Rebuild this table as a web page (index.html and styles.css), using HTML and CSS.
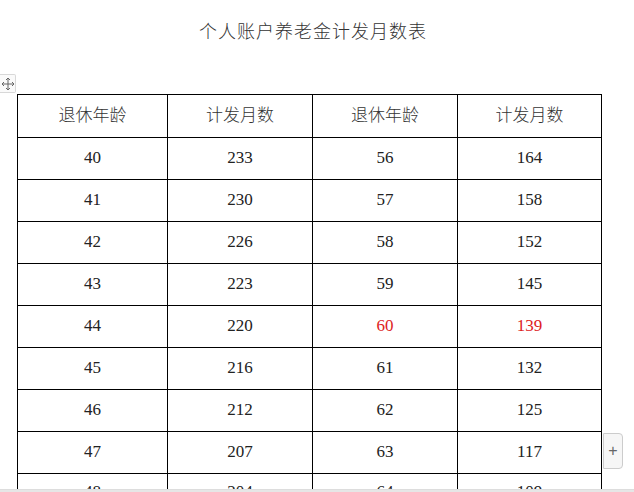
FILE: index.html
```html
<!DOCTYPE html>
<html lang="zh">
<head>
<meta charset="utf-8">
<title>个人账户养老金计发月数表</title>
<link rel="stylesheet" href="styles.css">
</head>
<body>
<div class="page">
  <h1 class="title">个人账户养老金计发月数表</h1>
  <div class="table-wrap">
    <span class="move-handle">
      <svg width="14" height="14" viewBox="0 0 14 14" fill="none" stroke="#666" stroke-width="1">
        <path d="M7 1v12M1 7h12"/>
        <path d="M5 3l2-2 2 2M5 11l2 2 2-2M3 5l-2 2 2 2M11 5l2 2-2 2"/>
      </svg>
    </span>
    <table class="months">
      <tr class="head"><td>退休年龄</td><td>计发月数</td><td>退休年龄</td><td>计发月数</td></tr>
      <tr><td>40</td><td>233</td><td>56</td><td>164</td></tr>
      <tr><td>41</td><td>230</td><td>57</td><td>158</td></tr>
      <tr><td>42</td><td>226</td><td>58</td><td>152</td></tr>
      <tr><td>43</td><td>223</td><td>59</td><td>145</td></tr>
      <tr><td>44</td><td>220</td><td class="hl">60</td><td class="hl">139</td></tr>
      <tr><td>45</td><td>216</td><td>61</td><td>132</td></tr>
      <tr><td>46</td><td>212</td><td>62</td><td>125</td></tr>
      <tr><td>47</td><td>207</td><td>63</td><td>117</td></tr>
      <tr class="last"><td>48</td><td>204</td><td>64</td><td>109</td></tr>
    </table>
    <span class="add-row">+</span>
  </div>
</div>
<div class="scrollbar"></div>
</body>
</html>
```
FILE: styles.css
```css
html, body {
  margin: 0;
  padding: 0;
  background: #fff;
}
body {
  width: 634px;
  height: 492px;
  overflow: hidden;
  position: relative;
}
.page {
  padding-top: 18px;
}
.title {
  margin: 0;
  text-align: center;
  padding-right: 8px;
  font-family: "Noto Sans CJK SC", sans-serif;
  font-weight: 300;
  font-size: 18px;
  line-height: 24px;
  letter-spacing: 1px;
  color: #333;
}
.table-wrap {
  position: relative;
  margin-top: 52px;
  padding-left: 17px;
}
.move-handle {
  position: absolute;
  left: 0;
  top: -20px;
  width: 15px;
  height: 17px;
  border: 1px solid #d8d8d8;
  border-left: none;
  border-radius: 0 2px 2px 0;
  background: #fafafa;
  display: flex;
  align-items: center;
  justify-content: center;
}
.months {
  border-collapse: collapse;
  table-layout: fixed;
  width: 585px;
}
.months td {
  border: 1.5px solid #000;
  height: 40px;
  padding: 0 0 1px;
  text-align: center;
  font-family: "Liberation Serif", serif;
  font-size: 17px;
  color: #222;
}
.months td:nth-child(1) { width: 149px; }
.months td:nth-child(2) { width: 144px; }
.months td:nth-child(3) { width: 144px; }
.months tr.head td {
  height: 37px;
  padding-bottom: 5px;
  font-family: "Noto Sans CJK SC", sans-serif;
  font-weight: 300;
  font-size: 17px;
  color: #333;
}
.months tr.last td {
  height: 35px;
  padding-bottom: 6px;
}
.months td.hl {
  color: #d22;
}
.add-row {
  position: absolute;
  left: 603px;
  top: 339px;
  width: 18px;
  height: 34px;
  border: 1px solid #ccc;
  border-radius: 0 4px 4px 0;
  background: #f6f6f6;
  display: flex;
  align-items: center;
  justify-content: center;
  font-family: "Liberation Sans", sans-serif;
  font-size: 16px;
  color: #666;
}
.scrollbar {
  position: absolute;
  left: 0;
  bottom: 0;
  width: 634px;
  height: 2px;
  background: #e6e6e6;
  border-top: 1px solid #ddd;
}
```
